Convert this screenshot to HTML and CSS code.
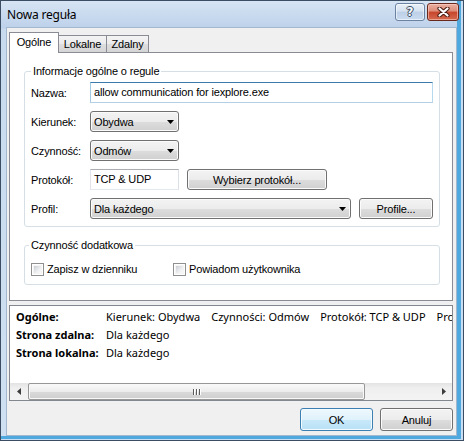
FILE: index.html
```html
<!DOCTYPE html>
<html lang="pl">
<head>
<meta charset="utf-8">
<title>Nowa reguła</title>
<link rel="stylesheet" href="styles.css">
</head>
<body>
<div class="window">
  <div class="titlebar">
    <span class="title">Nowa reguła</span>
    <div class="caption">
      <span class="cap help"><span class="qmark">?</span></span>
      <span class="cap close">
        <svg width="13" height="10" viewBox="0 0 13 10"><path d="M2.5 1.5 L10.5 8.5 M10.5 1.5 L2.5 8.5" stroke="#4a1a10" stroke-width="4.2" stroke-linecap="round"/><path d="M2.5 1.5 L10.5 8.5 M10.5 1.5 L2.5 8.5" stroke="#ffffff" stroke-width="2.2" stroke-linecap="round"/></svg>
      </span>
    </div>
  </div>
  <div class="client">
    <div class="tabs">
      <div class="tab active t1">Ogólne</div>
      <div class="tab t2">Lokalne</div>
      <div class="tab t3">Zdalny</div>
    </div>
    <div class="panel">
      <fieldset class="group g1">
        <legend>Informacje ogólne o regule</legend>
        <div class="rows">
          <div class="row"><span class="lbl">Nazwa:</span><div class="edit focus w-name">allow communication for iexplore.exe</div></div>
          <div class="row"><span class="lbl">Kierunek:</span><div class="combo w-short"><span>Obydwa</span><svg class="arrow" width="7" height="4" viewBox="0 0 7 4"><path d="M0 0h7L3.5 4z" fill="#000"/></svg></div></div>
          <div class="row"><span class="lbl">Czynność:</span><div class="combo w-short"><span>Odmów</span><svg class="arrow" width="7" height="4" viewBox="0 0 7 4"><path d="M0 0h7L3.5 4z" fill="#000"/></svg></div></div>
          <div class="row"><span class="lbl">Protokół:</span><div class="edit w-short">TCP &amp; UDP</div><button class="btn btn-proto">Wybierz protokół...</button></div>
          <div class="row"><span class="lbl">Profil:</span><div class="combo w-profile"><span>Dla każdego</span><svg class="arrow" width="7" height="4" viewBox="0 0 7 4"><path d="M0 0h7L3.5 4z" fill="#000"/></svg></div><button class="btn btn-profile">Profile...</button></div>
        </div>
      </fieldset>
      <fieldset class="group g2">
        <legend>Czynność dodatkowa</legend>
        <div class="checks">
          <span class="check c1"><span class="box"></span>Zapisz w dzienniku</span>
          <span class="check"><span class="box"></span>Powiadom użytkownika</span>
        </div>
      </fieldset>
    </div>
    <div class="summary">
      <div class="sum-body">
        <div class="srow"><b>Ogólne:</b><span class="vals"><span>Kierunek: Obydwa</span><span>Czynności: Odmów</span><span>Protokół: TCP &amp; UDP</span><span>Profil: Dla każdego</span></span></div>
        <div class="srow"><b>Strona zdalna:</b><span class="vals"><span>Dla każdego</span></span></div>
        <div class="srow"><b>Strona lokalna:</b><span class="vals"><span>Dla każdego</span></span></div>
      </div>
      <div class="hscroll">
        <div class="sbtn"><svg width="4" height="7" viewBox="0 0 4 7"><path d="M4 0v7L0 3.5z" fill="#3c3c3c"/></svg></div>
        <div class="thumb"><svg width="8" height="6" viewBox="0 0 8 6"><path d="M0 0h1v6H0zM3 0h1v6H3zM6 0h1v6H6z" fill="#5c5c5c"/><path d="M1 0h1v6H1zM4 0h1v6H4zM7 0h1v6H7z" fill="#ffffff"/></svg></div>
        <div class="track"></div>
        <div class="sbtn"><svg width="4" height="7" viewBox="0 0 4 7"><path d="M0 0v7L4 3.5z" fill="#3c3c3c"/></svg></div>
      </div>
    </div>
    <div class="buttons">
      <button class="btn dlg default">OK</button>
      <button class="btn dlg">Anuluj</button>
    </div>
  </div>
</div>
</body>
</html>
```

FILE: styles.css
```css
html, body {
  margin: 0;
  padding: 0;
  background: #ffffff;
}

.window {
  width: 464px;
  height: 441px;
  box-sizing: border-box;
  border: 1px solid #3a4d63;
  display: flex;
  flex-direction: column;
  background: linear-gradient(to bottom, #d6e4f4 0px, #bdd1ea 27px, #c8daee 28px, #cfe0f2 100%);
  box-shadow: inset -2px -1px 0 #c9def2, inset -6px -4px 0 #4fa9df;
  font-family: "Liberation Sans", Arial, sans-serif;
  font-size: 11px;
  letter-spacing: -0.15px;
  color: #000;
}

.titlebar {
  height: 27px;
  flex: none;
  display: flex;
  padding: 0 4px 0 6px;
}

.title {
  font-family: "Noto Sans", sans-serif;
  font-size: 12px;
  letter-spacing: -0.2px;
  line-height: 27px;
  color: #000;
}

.caption {
  margin-left: auto;
  margin-top: 2px;
  display: flex;
  gap: 2px;
  height: 18px;
}

.cap {
  height: 18px;
  box-sizing: border-box;
  border: 1px solid;
  border-radius: 3px;
  display: flex;
  align-items: center;
  justify-content: center;
}

.help {
  width: 30px;
  border-color: #6b82a0;
  background: linear-gradient(to bottom, #e9f0f8 0%, #d5e2f0 45%, #bdd0e7 50%, #cadcf0 100%);
  box-shadow: inset 0 0 0 1px rgba(255, 255, 255, 0.55);
}

.qmark {
  font-family: "DejaVu Sans", sans-serif;
  font-weight: bold;
  font-size: 12px;
  line-height: 14px;
  letter-spacing: 0;
  color: #f4f7fb;
  text-shadow: 1px 0 0 #3a4b60, -1px 0 0 #3a4b60, 0 1px 0 #3a4b60, 0 -1px 0 #3a4b60;
}

.close {
  width: 32px;
  border-color: #6a281c;
  background: linear-gradient(to bottom, #eab0a2 0%, #dd8c78 45%, #c7452b 50%, #d46a4f 100%);
  box-shadow: inset 0 0 0 1px rgba(255, 215, 205, 0.55);
}

.client {
  flex: 1;
  margin: 0 7px 5px 6px;
  background: #f0f0f0;
  padding: 4px 3px 0 2px;
  display: flex;
  flex-direction: column;
  box-shadow: 0 0 0 1px #a3b7cf;
}

.tabs {
  display: flex;
  align-items: flex-end;
  height: 20px;
  flex: none;
}

.tab {
  box-sizing: border-box;
  height: 17px;
  border: 1px solid #898c95;
  border-bottom: 0;
  background: linear-gradient(to bottom, #f4f4f4 0%, #ebebeb 50%, #dedede 51%, #d5d5d5 100%);
  text-align: center;
  line-height: 16px;
  margin-left: -1px;
}

.tab.active {
  height: 21px;
  background: #ffffff;
  margin-bottom: -1px;
  margin-left: 0;
  position: relative;
  z-index: 1;
  line-height: 19px;
}

.t1 { width: 50px; }
.t2 { width: 49px; }
.t3 { width: 43px; }

.panel {
  box-sizing: border-box;
  height: 249px;
  flex: none;
  border: 1px solid #898c95;
  background: #ffffff;
  padding-top: 12px;
}

.group {
  box-sizing: border-box;
  width: 416px;
  min-width: 0;
  margin: 0 0 0 14px;
  border: 1px solid #d5dfe5;
  border-radius: 3px;
}

.group legend {
  padding: 0 2px;
  height: 13px;
  line-height: 13px;
  font-size: 11px;
}

.g1 {
  padding: 4px 6px 7px 6px;
}

.g2 {
  margin-top: 12px;
  padding: 11px 6px 8px 6px;
}

.g2 legend {
  margin-left: -2px;
}

.rows {
  display: flex;
  flex-direction: column;
  gap: 8px;
}

.row {
  display: flex;
  align-items: center;
  height: 21px;
}

.lbl {
  width: 59px;
  flex: none;
}

.edit {
  box-sizing: border-box;
  height: 21px;
  border: 1px solid;
  border-color: #abadb3 #dbdfe6 #e3e9ef #e2e3ea;
  background: #ffffff;
  padding-left: 3px;
  line-height: 19px;
  white-space: nowrap;
  overflow: hidden;
}

.edit.focus {
  border-color: #3d7bad #b7d9ed #b5cfe7 #a4c9e3;
}

.w-name { width: 343px; }
.w-short { width: 89px; }
.w-profile { width: 261px; }

.combo {
  box-sizing: border-box;
  height: 21px;
  border: 1px solid #707070;
  border-radius: 3px;
  background: linear-gradient(to bottom, #f3f3f3 0%, #ececec 50%, #dddddd 51%, #d0d0d0 100%);
  box-shadow: inset 0 0 0 1px #fbfbfb;
  display: flex;
  align-items: center;
  padding: 0 4px 0 3px;
}

.combo .arrow {
  margin-left: auto;
  flex: none;
}

.btn {
  box-sizing: border-box;
  height: 21px;
  margin: 0;
  padding: 0;
  border: 1px solid #707070;
  border-radius: 3px;
  background: linear-gradient(to bottom, #f3f3f3 0%, #ececec 50%, #dddddd 51%, #d0d0d0 100%);
  box-shadow: inset 0 0 0 1px #fbfbfb;
  font-family: inherit;
  font-size: 11px;
  letter-spacing: -0.15px;
  color: #000;
  text-align: center;
}

.btn-proto {
  width: 140px;
  margin-left: 8px;
}

.btn-profile {
  width: 74px;
  margin-left: 8px;
}

.checks {
  display: flex;
  height: 13px;
  align-items: center;
}

.check {
  display: flex;
  align-items: center;
  gap: 3px;
  line-height: 13px;
}

.check.c1 {
  width: 142px;
}

.box {
  box-sizing: border-box;
  width: 13px;
  height: 13px;
  border: 1px solid #8f8f8f;
  padding: 2px;
  background: linear-gradient(135deg, #c9cdd3 0%, #eeeff1 60%, #fafafa 100%) content-box, #f4f4f4;
  box-shadow: inset 0 0 0 1px #ffffff;
}

.summary {
  box-sizing: border-box;
  height: 96px;
  flex: none;
  margin-top: 4px;
  border: 1px solid #828790;
  background: #ffffff;
  display: flex;
  flex-direction: column;
}

.sum-body {
  flex: 1;
  padding: 2px 0 0 6px;
  overflow: hidden;
  font-family: "Noto Sans", sans-serif;
  font-size: 11px;
  letter-spacing: 0;
}

.srow {
  display: flex;
  height: 18px;
  line-height: 18px;
  white-space: nowrap;
}

.srow b {
  width: 90px;
  flex: none;
}

.vals {
  display: flex;
  gap: 11px;
}

.hscroll {
  height: 17px;
  flex: none;
  display: flex;
  background: linear-gradient(to bottom, #e3e3e3 0%, #efefef 30%, #f3f3f3 100%);
}

.sbtn {
  width: 17px;
  flex: none;
  display: flex;
  align-items: center;
  justify-content: center;
}

.thumb {
  box-sizing: border-box;
  width: 337px;
  margin-left: 1px;
  flex: none;
  border: 1px solid #979797;
  border-radius: 2px;
  background: linear-gradient(to bottom, #fafafa 0%, #ececec 50%, #dadada 51%, #cfcfcf 100%);
  box-shadow: inset 0 0 0 1px #f8f8f8;
  display: flex;
  align-items: center;
  justify-content: center;
}

.track {
  flex: 1;
}

.buttons {
  display: flex;
  justify-content: flex-end;
  gap: 7px;
  margin-top: 7px;
}

.btn.dlg {
  width: 73px;
  height: 23px;
}

.btn.default {
  border-color: #3c7fb1;
  background: linear-gradient(to bottom, #eef8fd 0%, #dff2fc 50%, #c9e9f9 51%, #b8e0f6 100%);
  box-shadow: inset 0 0 0 1px #f4fbff;
}
```
